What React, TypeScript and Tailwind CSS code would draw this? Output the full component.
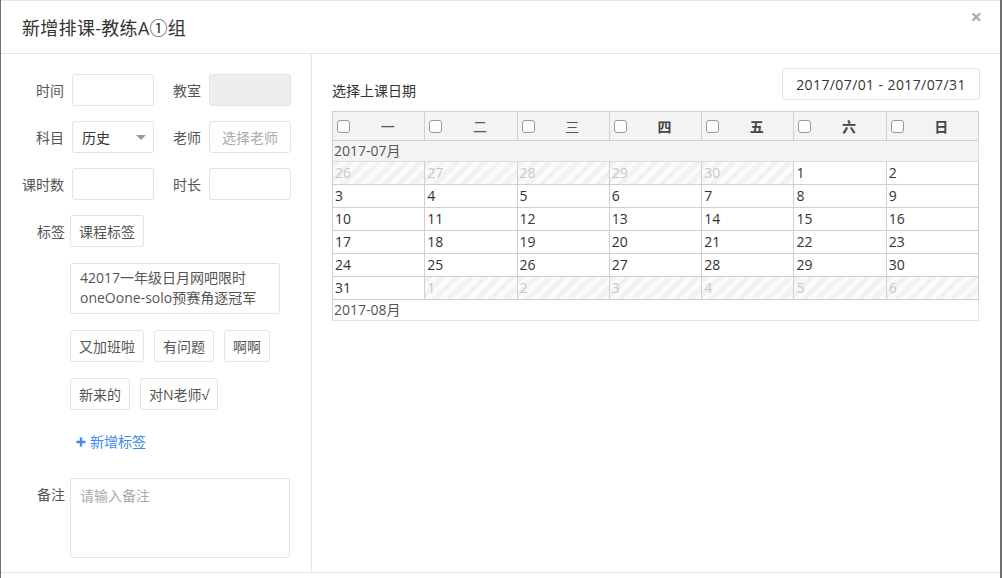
import React from "react";

const font = { fontFamily: '"Open Sans", "Noto Sans CJK SC", sans-serif' };

const stripe =
  "bg-[repeating-linear-gradient(135deg,#f1f2f4_0px,#f1f2f4_5px,#fbfbfc_5px,#fbfbfc_10px)]";

function Label({ children, w = "w-[44px]" }: { children: React.ReactNode; w?: string }) {
  return <div className={`${w} shrink-0 text-right text-[14px] text-[#555] pr-2`}>{children}</div>;
}

function Tag({ children }: { children: React.ReactNode }) {
  return (
    <div className="h-[32px] px-[8px] flex items-center border border-[#e3e3e3] rounded-[3px] text-[14px] text-[#555] bg-white">
      {children}
    </div>
  );
}

type Cell = { d: number; off?: boolean };

const weeks: Cell[][] = [
  [{ d: 26, off: true }, { d: 27, off: true }, { d: 28, off: true }, { d: 29, off: true }, { d: 30, off: true }, { d: 1 }, { d: 2 }],
  [3, 4, 5, 6, 7, 8, 9].map((d) => ({ d })),
  [10, 11, 12, 13, 14, 15, 16].map((d) => ({ d })),
  [17, 18, 19, 20, 21, 22, 23].map((d) => ({ d })),
  [24, 25, 26, 27, 28, 29, 30].map((d) => ({ d })),
  [{ d: 31 }, { d: 1, off: true }, { d: 2, off: true }, { d: 3, off: true }, { d: 4, off: true }, { d: 5, off: true }, { d: 6, off: true }],
];

const days = ["一", "二", "三", "四", "五", "六", "日"];

function Check() {
  return <span className="w-[13px] h-[13px] shrink-0 border border-[#9a9a9a] rounded-[3px] bg-white ml-[4px]" />;
}

export default function App() {
  return (
    <div className="w-[1002px] h-[578px] bg-[#6f6f6f] overflow-hidden" style={font}>
      <div className="ml-[1px] w-[999px] h-[578px] bg-white border-t border-[#e8e8e8] flex flex-col">
        {/* header */}
        <div className="h-[53px] shrink-0 border-b border-[#e5e5e5] flex items-center justify-between pl-[21px] pr-[18px]">
          <div className="text-[18px] text-[#333] leading-none pt-[2px] tracking-[0.3px]">新增排课-教练A①组</div>
          <div className="text-[20px] font-bold text-[#a9a9a9] leading-none -mt-[20px]">×</div>
        </div>
        {/* body */}
        <div className="flex h-[519px] border-b border-[#e5e5e5]">
          {/* left */}
          <div className="w-[311px] shrink-0 border-r border-[#e5e5e5] pl-[20px] pt-[20px] flex flex-col gap-[15px]">
            <div className="flex items-center">
              <Label w="w-[51px]">时间</Label>
              <div className="w-[82px] h-[32px] border border-[#e3e3e3] rounded-[3px]" />
              <Label w="w-[55px]">教室</Label>
              <div className="w-[82px] h-[32px] border border-[#e3e3e3] rounded-[3px] bg-[#eeeeee]" />
            </div>
            <div className="flex items-center">
              <Label w="w-[51px]">科目</Label>
              <div className="w-[82px] h-[32px] border border-[#e3e3e3] rounded-[3px] flex items-center justify-between pl-[9px] pr-[7px] text-[14px] text-[#333]">
                <span>历史</span>
                <span className="w-0 h-0 border-l-[5px] border-r-[5px] border-t-[5px] border-l-transparent border-r-transparent border-t-[#999] mt-[1px]" />
              </div>
              <Label w="w-[55px]">老师</Label>
              <div className="w-[82px] h-[32px] border border-[#e3e3e3] rounded-[3px] flex items-center pl-[12px] text-[14px] text-[#aaa]">
                选择老师
              </div>
            </div>
            <div className="flex items-center">
              <Label w="w-[51px]">课时数</Label>
              <div className="w-[82px] h-[32px] border border-[#e3e3e3] rounded-[3px]" />
              <Label w="w-[55px]">时长</Label>
              <div className="w-[82px] h-[32px] border border-[#e3e3e3] rounded-[3px]" />
            </div>
            <div className="flex">
              <div className="w-[49px] shrink-0 flex items-center justify-end pr-[5px] h-[32px] text-[14px] text-[#555]">标签</div>
              <div className="flex flex-col gap-[16px]">
                <div className="flex">
                  <Tag>课程标签</Tag>
                </div>
                <div className="w-[210px] h-[51px] border border-[#e3e3e3] rounded-[3px] px-[9px] pt-[4px] text-[14px] leading-[20px] text-[#555]">
                  42017一年级日月网吧限时
                  <br />
                  oneOone-solo预赛角逐冠军
                </div>
                <div className="flex gap-[10px]">
                  <Tag>又加班啦</Tag>
                  <Tag>有问题</Tag>
                  <Tag>啊啊</Tag>
                </div>
                <div className="flex gap-[10px]">
                  <Tag>新来的</Tag>
                  <Tag>对N老师√</Tag>
                </div>
                <div className="h-[31px] flex items-center pl-[6px] text-[14px] text-[#3d8bf0] gap-[4px]">
                  <svg width="10" height="10" viewBox="0 0 10 10">
                    <path d="M5 0.5v9M0.5 5h9" stroke="#3d8bf0" strokeWidth="2.4" />
                  </svg>
                  <span>新增标签</span>
                </div>
              </div>
            </div>
            <div className="flex mt-[6px]">
              <div className="w-[49px] shrink-0 text-right pr-[5px] pt-[6px] text-[14px] text-[#555]">备注</div>
              <div className="w-[220px] h-[80px] border border-[#e3e3e3] rounded-[3px] px-[9px] pt-[6px] text-[14px] text-[#aaa]">
                请输入备注
              </div>
            </div>
          </div>
          {/* right */}
          <div className="flex-1 pl-[20px] pr-[20px] pt-[14px]">
            <div className="flex items-center justify-between h-[32px]">
              <div className="text-[14px] text-[#333] pt-[12px]">选择上课日期</div>
              <div className="w-[198px] h-[32px] border border-[#e3e3e3] rounded-[3px] flex items-center justify-center text-[14px] text-[#333] tracking-[0.4px]">
                2017/07/01 - 2017/07/31
              </div>
            </div>
            <div className="mt-[11px] w-[647px] border-l border-t border-[#cfcfcf] text-[14px]">
              <div className="grid grid-cols-7 bg-[#f3f3f3]">
                {days.map((d, i) => (
                  <div key={d} className="h-[29px] border-r border-b border-[#cfcfcf] flex items-center">
                    <Check />
                    <span className={`flex-1 text-center pl-[1px] text-[14px] ${i >= 3 ? "font-bold text-[#444]" : "text-[#555]"}`}>{d}</span>
                  </div>
                ))}
              </div>
              <div className="h-[21px] bg-[#f3f3f3] border-r border-b border-[#dcdcdc] flex items-center pl-[1px] text-[#555] leading-none">
                2017-07月
              </div>
              {weeks.map((w, wi) => (
                <div key={wi} className="grid grid-cols-7">
                  {w.map((c, ci) => (
                    <div
                      key={ci}
                      className={`h-[23px] border-r border-b border-[#cfcfcf] pl-[2px] flex items-center leading-none ${
                        c.off ? `${stripe} text-[#c8c8c8]` : "text-[#333]"
                      }`}
                    >
                      {c.d}
                    </div>
                  ))}
                </div>
              ))}
              <div className="h-[21px] border-r border-b border-[#e3e3e3] flex items-center pl-[1px] text-[#555] leading-none">
                2017-08月
              </div>
            </div>
          </div>
        </div>
      </div>
    </div>
  );
}
